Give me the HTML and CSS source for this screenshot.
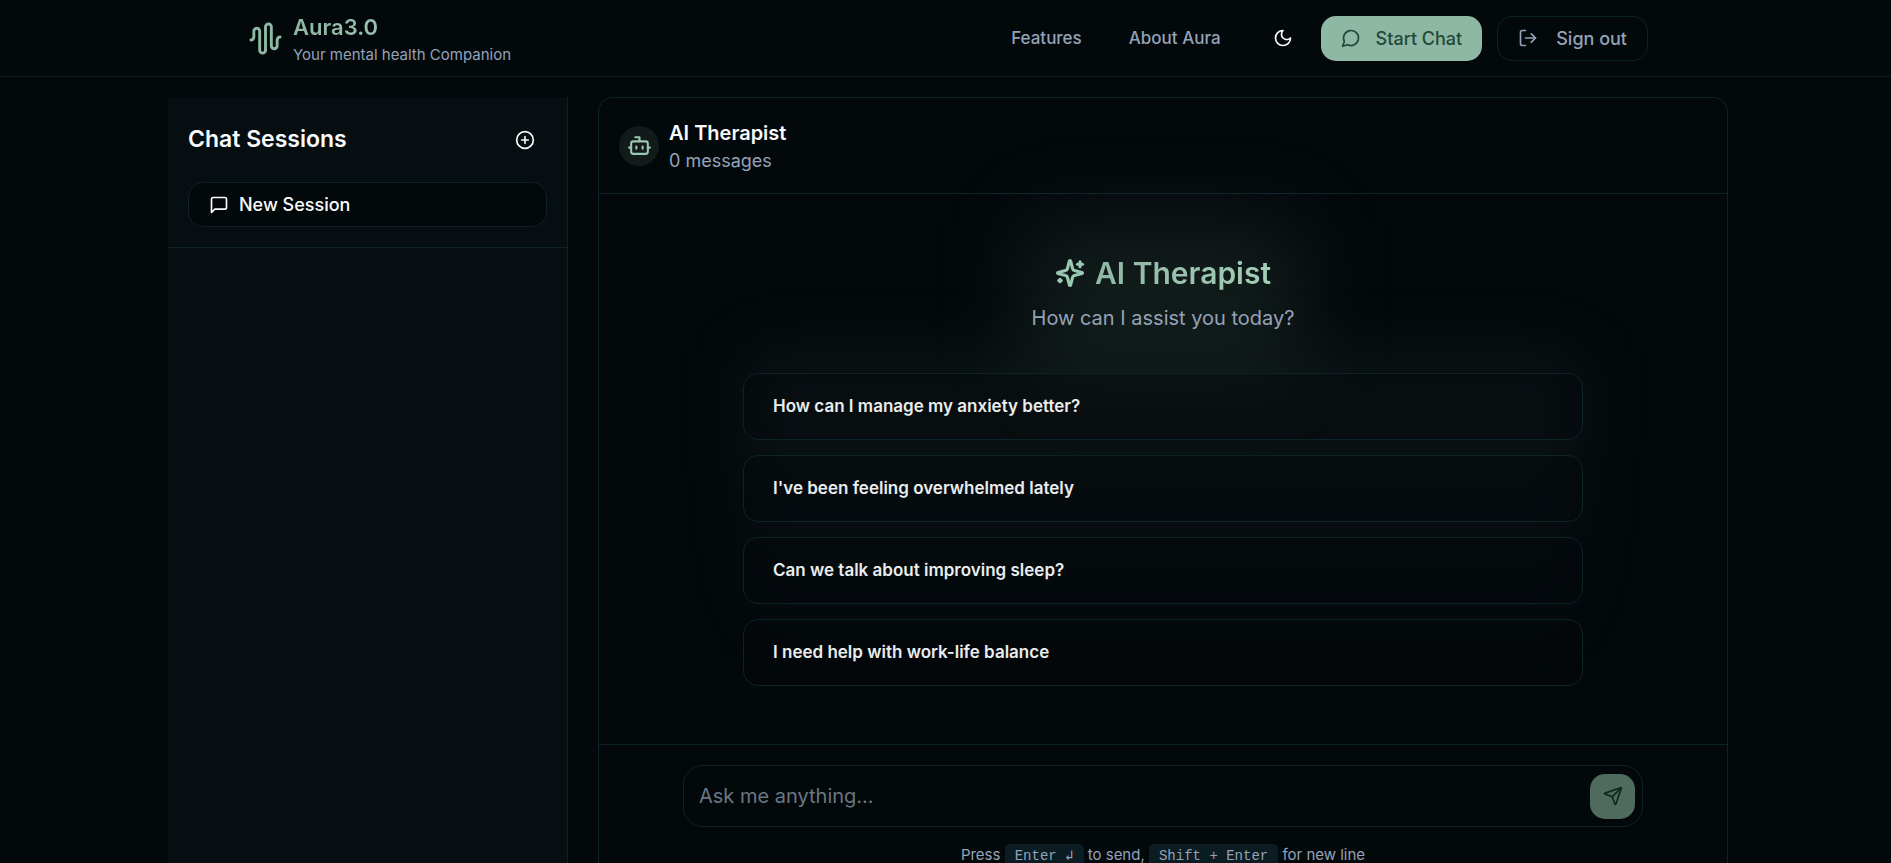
FILE: index.html
```html
<!DOCTYPE html>
<html lang="en">
<head>
<meta charset="utf-8">
<meta name="viewport" content="width=device-width, initial-scale=1">
<title>Aura3.0</title>
<link rel="stylesheet" href="styles.css">
</head>
<body>
<header class="site-header">
  <div class="site-header-inner">
    <a class="brand" href="#">
      <svg class="icon brand-icon" viewBox="0 0 24 24" aria-hidden="true"><path d="M2 13a2 2 0 0 0 2-2V7a2 2 0 0 1 4 0v13a2 2 0 0 0 4 0V4a2 2 0 0 1 4 0v13a2 2 0 0 0 4 0v-4a2 2 0 0 1 2-2"/></svg>
      <span class="brand-text">
        <span class="brand-name">Aura3.0</span>
        <span class="brand-tagline">Your mental health Companion</span>
      </span>
    </a>
    <div class="header-right">
      <nav class="nav">
        <a class="nav-link" href="#">Features</a>
        <a class="nav-link" href="#">About Aura</a>
      </nav>
      <div class="header-actions">
        <button class="icon-button" type="button" aria-label="Toggle theme">
          <svg class="icon" viewBox="0 0 24 24"><path d="M12 3a6 6 0 0 0 9 9 9 9 0 1 1-9-9Z"/></svg>
        </button>
        <a class="button button-primary" href="#">
          <svg class="icon" viewBox="0 0 24 24" aria-hidden="true"><path d="M7.9 20A9 9 0 1 0 4 16.1L2 22Z"/></svg>
          Start Chat
        </a>
        <button class="button button-outline sign-out" type="button">
          <svg class="icon" viewBox="0 0 24 24" aria-hidden="true"><path d="M9 21H5a2 2 0 0 1-2-2V5a2 2 0 0 1 2-2h4"/><path d="m16 17 5-5-5-5"/><path d="M21 12H9"/></svg>
          Sign out
        </button>
      </div>
    </div>
  </div>
</header>

<main class="page">
  <div class="workspace">
    <aside class="sidebar">
      <div class="sidebar-top">
        <div class="sidebar-heading">
          <h2 class="sidebar-title">Chat Sessions</h2>
          <button class="icon-button" type="button" aria-label="Add session">
            <svg class="icon" viewBox="0 0 24 24"><circle cx="12" cy="12" r="10"/><path d="M8 12h8"/><path d="M12 8v8"/></svg>
          </button>
        </div>
        <button class="button button-outline new-session" type="button">
          <svg class="icon" viewBox="0 0 24 24" aria-hidden="true"><path d="M21 15a2 2 0 0 1-2 2H7l-4 4V5a2 2 0 0 1 2-2h14a2 2 0 0 1 2 2z"/></svg>
          New Session
        </button>
      </div>
    </aside>

    <section class="chat">
      <div class="chat-header">
        <span class="avatar">
          <svg class="icon avatar-icon" viewBox="0 0 24 24" aria-hidden="true"><path d="M12 8V4H8"/><rect width="16" height="12" x="4" y="8" rx="2"/><path d="M2 14h2"/><path d="M20 14h2"/><path d="M15 13v2"/><path d="M9 13v2"/></svg>
        </span>
        <div>
          <h2 class="chat-title">AI Therapist</h2>
          <p class="chat-count">0 messages</p>
        </div>
      </div>

      <div class="welcome">
        <div class="welcome-inner">
          <div class="hero">
            <div class="glow" aria-hidden="true"></div>
            <h1 class="hero-title">
              <svg class="icon hero-icon" viewBox="0 0 24 24" aria-hidden="true"><path d="M9.937 15.5A2 2 0 0 0 8.5 14.063l-6.135-1.582a.5.5 0 0 1 0-.962L8.5 9.936A2 2 0 0 0 9.937 8.5l1.582-6.135a.5.5 0 0 1 .963 0L14.063 8.5A2 2 0 0 0 15.5 9.937l6.135 1.581a.5.5 0 0 1 0 .964L15.5 14.063a2 2 0 0 0-1.437 1.437l-1.582 6.135a.5.5 0 0 1-.963 0z"/><path d="M20 3v4"/><path d="M22 5h-4"/><path d="M4 17v2"/><path d="M5 18H3"/></svg>
              <span class="hero-name">AI Therapist</span>
            </h1>
            <p class="hero-subtitle">How can I assist you today?</p>
          </div>
          <div class="suggestions">
            <div class="glow glow-wide" aria-hidden="true"></div>
            <button class="suggestion" type="button">How can I manage my anxiety better?</button>
            <button class="suggestion" type="button">I've been feeling overwhelmed lately</button>
            <button class="suggestion" type="button">Can we talk about improving sleep?</button>
            <button class="suggestion" type="button">I need help with work-life balance</button>
          </div>
        </div>
      </div>

      <div class="composer">
        <form class="composer-form">
          <input class="composer-input" type="text" placeholder="Ask me anything..." aria-label="Message">
          <button class="send" type="submit" aria-label="Send message">
            <svg class="icon" viewBox="0 0 24 24"><path d="M14.536 21.686a.5.5 0 0 0 .937-.024l6.5-19a.496.496 0 0 0-.635-.635l-19 6.5a.5.5 0 0 0-.024.937l7.93 3.18a2 2 0 0 1 1.112 1.11z"/><path d="m21.854 2.147-10.94 10.939"/></svg>
          </button>
        </form>
        <p class="hint">Press <kbd class="key">Enter ↲</kbd> to send, <kbd class="key">Shift + Enter</kbd> for new line</p>
      </div>
    </section>
  </div>
</main>
</body>
</html>
```
FILE: styles.css
```css
:root {
  --bg: #03080b;
  --border: #0e222a;
  --text: #f8fafc;
  --muted: #94a3b8;
  --primary: #8fb8a4;
  --radius: 15px;
}

* {
  box-sizing: border-box;
}

body {
  margin: 0;
  height: 100vh;
  overflow: hidden;
  background: var(--bg);
  color: var(--text);
  font-family: Inter, "Liberation Sans", sans-serif;
  font-size: 20px;
  line-height: 30px;
}

h1, h2, p {
  margin: 0;
}

a {
  color: inherit;
  text-decoration: none;
}

button, input {
  font: inherit;
  color: inherit;
}

.icon {
  width: 20px;
  height: 20px;
  flex: none;
  fill: none;
  stroke: currentColor;
  stroke-width: 2;
  stroke-linecap: round;
  stroke-linejoin: round;
}

/* Header */

.site-header {
  border-bottom: 1px solid #10191c;
  padding-left: 5px;
}

.site-header-inner {
  display: flex;
  align-items: center;
  justify-content: space-between;
  max-width: 1400px;
  height: 76px;
  margin: 0 auto;
}

.brand {
  display: flex;
  align-items: center;
  gap: 10px;
}

.brand-icon {
  width: 35px;
  height: 35px;
  color: var(--primary);
}

.brand-text {
  display: flex;
  flex-direction: column;
  gap: 1px;
}

.brand-name {
  font-size: 22px;
  line-height: 32px;
  font-weight: 600;
  color: transparent;
  background: linear-gradient(to right, #8fb8a4, #a2cdb7);
  background-clip: text;
}

.brand-tagline {
  font-size: 15px;
  line-height: 22px;
  color: var(--muted);
}

.header-right {
  display: flex;
  align-items: center;
  gap: 40px;
}

.nav {
  display: flex;
  gap: 47px;
}

.nav-link {
  font-size: 17px;
  font-weight: 500;
  line-height: 25px;
  color: var(--muted);
}

.header-actions {
  display: flex;
  align-items: center;
  gap: 15px;
}

.icon-button {
  display: grid;
  place-items: center;
  width: 45px;
  height: 45px;
  padding: 0;
  border: 0;
  border-radius: var(--radius);
  background: transparent;
}

.button {
  display: flex;
  align-items: center;
  gap: 15px;
  height: 45px;
  padding: 0 20px;
  border: 0;
  border-radius: var(--radius);
  font-size: 18px;
  font-weight: 500;
  line-height: 25px;
}

.button-primary {
  background: var(--primary);
  color: #23483a;
}

.button-outline {
  border: 1px solid var(--border);
  background: var(--bg);
}

.sign-out {
  gap: 18px;
  color: var(--muted);
}

/* Workspace */

.page {
  padding: 20px 0 0 5px;
}

.workspace {
  display: flex;
  gap: 30px;
  max-width: 1600px;
  height: calc(100vh - 97px);
  margin: 0 auto;
  padding: 0 20px;
}

.sidebar {
  flex: none;
  width: 400px;
  border-right: 1px solid var(--border);
  background: #060e12;
}

.sidebar-top {
  padding: 20px;
  border-bottom: 1px solid var(--border);
}

.sidebar-heading {
  display: flex;
  align-items: center;
  justify-content: space-between;
  margin-bottom: 20px;
}

.sidebar-title {
  font-size: 23px;
  line-height: 35px;
  font-weight: 600;
}

.new-session {
  gap: 10px;
  width: 100%;
}

.chat {
  flex: 1;
  border: 1px solid var(--border);
  border-bottom: 0;
  border-radius: var(--radius) var(--radius) 0 0;
}

.chat-header {
  display: flex;
  align-items: center;
  gap: 10px;
  padding: 20px;
  border-bottom: 1px solid var(--border);
}

.avatar {
  display: grid;
  place-items: center;
  width: 40px;
  height: 40px;
  border-radius: 50%;
  background: #121a1a;
  color: #9bc8b1;
}

.avatar-icon {
  width: 25px;
  height: 25px;
}

.chat-title {
  font-size: 20px;
  line-height: 30px;
  font-weight: 600;
}

.chat-count {
  font-size: 18px;
  line-height: 25px;
  color: var(--muted);
}

/* Welcome */

.welcome {
  display: grid;
  place-items: center;
  height: 550px;
}

.welcome-inner {
  display: flex;
  flex-direction: column;
  gap: 40px;
  width: 100%;
  max-width: 840px;
}

.hero {
  position: relative;
  display: flex;
  flex-direction: column;
  align-items: center;
  gap: 10px;
}

.hero-title {
  position: relative;
  display: flex;
  align-items: center;
  gap: 10px;
  font-size: 30px;
  line-height: 40px;
  font-weight: 600;
}

.hero-icon {
  width: 30px;
  height: 30px;
  color: #9bc8b1;
  stroke-width: 2.5;
}

.hero-name {
  color: transparent;
  background: linear-gradient(to right, #8fb8a4, #a2cdb7);
  background-clip: text;
}

.hero-subtitle {
  position: relative;
  color: var(--muted);
}

.glow {
  position: absolute;
  top: -30px;
  left: 50%;
  width: 280px;
  height: 140px;
  transform: translateX(-50%);
  background: rgb(143 184 160 / 12%);
  filter: blur(45px);
}

.suggestions {
  position: relative;
  display: grid;
  gap: 15px;
}

.glow-wide {
  top: -20px;
  width: 840px;
  height: 320px;
  background: linear-gradient(rgb(143 184 164 / 8%), transparent);
  filter: blur(35px);
}

.suggestion {
  position: relative;
  height: 67px;
  padding: 0 29px;
  border: 1px solid var(--border);
  border-radius: var(--radius);
  background: rgb(3 8 11 / 30%);
  color: #e9edee;
  font-size: 17px;
  font-weight: 600;
  line-height: 25px;
  text-align: left;
}

/* Composer */

.composer {
  padding: 20px;
  border-top: 1px solid var(--border);
}

.composer-form {
  display: flex;
  align-items: center;
  max-width: 960px;
  height: 62px;
  margin: 0 auto;
  padding: 0 7px 0 15px;
  border: 1px solid var(--border);
  border-radius: 20px;
}

.composer-input {
  flex: 1;
  padding: 0;
  border: 0;
  outline: 0;
  background: transparent;
}

.composer-input::placeholder {
  color: #6b7683;
  opacity: 1;
}

.send {
  display: grid;
  place-items: center;
  width: 45px;
  height: 45px;
  padding: 0;
  border: 0;
  border-radius: var(--radius);
  background: #4f6b5e;
  color: #10271f;
}

.hint {
  margin-top: 15px;
  font-size: 15px;
  line-height: 25px;
  text-align: center;
  color: var(--muted);
}

.key {
  display: inline-block;
  padding: 0 10px;
  border-radius: 5px;
  background: #0c1c23;
  font-family: "Liberation Mono", monospace;
  font-size: 14px;
}
```
